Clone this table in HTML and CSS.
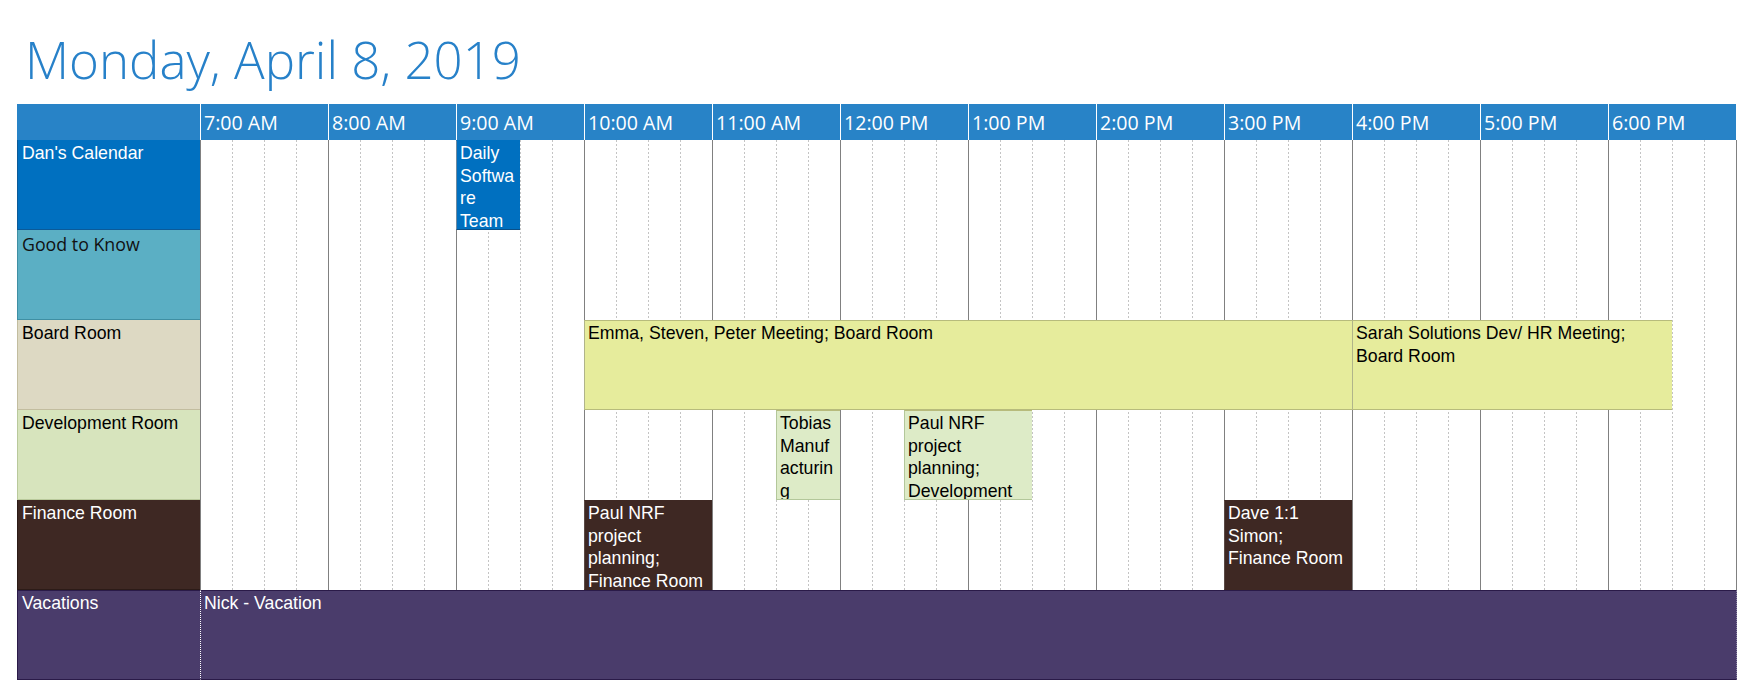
FILE: index.html
```html
<!DOCTYPE html>
<html lang="en">
<head>
<meta charset="utf-8">
<title>Monday, April 8, 2019</title>
<link rel="stylesheet" href="styles.css">
</head>
<body>
<div class="page">
  <h1 class="title">Monday, April 8, 2019</h1>
  <div class="sched">
    <div class="hcorner"></div>
    <div class="hh">7:00 AM</div>
    <div class="hh">8:00 AM</div>
    <div class="hh">9:00 AM</div>
    <div class="hh">10:00 AM</div>
    <div class="hh">11:00 AM</div>
    <div class="hh">12:00 PM</div>
    <div class="hh">1:00 PM</div>
    <div class="hh">2:00 PM</div>
    <div class="hh">3:00 PM</div>
    <div class="hh">4:00 PM</div>
    <div class="hh">5:00 PM</div>
    <div class="hh">6:00 PM</div>

    <div class="lbl r1 dan">Dan's Calendar</div>
    <div class="lbl r2 good">Good to Know</div>
    <div class="lbl r3 board">Board Room</div>
    <div class="lbl r4 dev">Development Room</div>
    <div class="lbl r5 fin">Finance Room</div>
    <div class="lbl r6 vac">Vacations</div>

    <div class="lines">
      <i></i><i></i><i></i><i></i><i></i><i></i><i></i><i></i>
      <i></i><i></i><i></i><i></i><i></i><i></i><i></i><i></i>
      <i></i><i></i><i></i><i></i><i></i><i></i><i></i><i></i>
      <i></i><i></i><i></i><i></i><i></i><i></i><i></i><i></i>
      <i></i><i></i><i></i><i></i><i></i><i></i><i></i><i></i>
      <i></i><i></i><i></i><i></i><i></i><i></i><i></i><i></i>
    </div>

    <div class="ev r1 ev-dan" style="grid-column: 10 / 12">Daily Software Team</div>
    <div class="ev r3 ev-board" style="grid-column: 14 / 38">Emma, Steven, Peter Meeting; Board Room</div>
    <div class="ev r3 ev-board" style="grid-column: 38 / 48">Sarah Solutions Dev/ HR Meeting; Board Room</div>
    <div class="ev r4 ev-dev" style="grid-column: 20 / 22">Tobias Manufacturing</div>
    <div class="ev r4 ev-dev" style="grid-column: 24 / 28">Paul NRF project planning; Development</div>
    <div class="ev r5 ev-fin" style="grid-column: 14 / 18">Paul NRF project planning; Finance Room</div>
    <div class="ev r5 ev-fin" style="grid-column: 34 / 38">Dave 1:1 Simon; Finance Room</div>
    <div class="ev r6 ev-vac" style="grid-column: 2 / 51">Nick - Vacation</div>
  </div>
</div>
</body>
</html>
```

FILE: styles.css
```css
html, body {
  margin: 0;
  padding: 0;
  background: #ffffff;
}

.page {
  padding: 25px 0 0 17px;
}

.title {
  margin: 0 0 11px 0;
  padding-left: 8px;
  font-family: "Open Sans", "Liberation Sans", sans-serif;
  font-weight: 300;
  font-size: 51px;
  line-height: 68px;
  color: #2781c9;
  white-space: nowrap;
}

.sched {
  display: grid;
  grid-template-columns: 183px repeat(48, 32px) 1px;
  grid-template-rows: 36px repeat(6, 90px);
  font-family: "Liberation Sans", Arial, sans-serif;
  font-size: 17.7px;
  line-height: 22.5px;
}

/* header */
.hcorner {
  grid-row: 1;
  grid-column: 1;
  background: #2883c7;
}

.hh {
  grid-row: 1;
  grid-column: span 4;
  background: #2883c7;
  border-left: 1px solid #ffffff;
  padding: 2px 0 0 3px;
  color: #ffffff;
  font-family: "Open Sans", "Liberation Sans", sans-serif;
  font-size: 19.6px;
  line-height: 34px;
  white-space: nowrap;
  overflow: hidden;
}

.hh:last-child {
  grid-column: span 5;
}

/* row placement */
.r1 { grid-row: 2; }
.r2 { grid-row: 3; }
.r3 { grid-row: 4; }
.r4 { grid-row: 5; }
.r5 { grid-row: 6; }
.r6 { grid-row: 7; }

/* row labels */
.lbl {
  grid-column: 1;
  padding: 2px 4px 0 4px;
  border-left: 1px solid rgba(0, 0, 0, 0.22);
  border-bottom: 1px solid rgba(0, 0, 0, 0.22);
  overflow: hidden;
  white-space: nowrap;
}

.dan { background: #0070c0; color: #ffffff; border-color: #0b5a98; }
.good {
  background: #5bafc4;
  color: #111111;
  font-family: "Open Sans", "Liberation Sans", sans-serif;
  font-size: 17.8px;
  padding-top: 3px;
  border-color: #3f8fa3;
}
.board { background: #ddd9c3; color: #000000; border-color: #c2bd9f; }
.dev { background: #d7e4bd; color: #000000; border-color: #b9c99b; }
.fin { background: #3e2823; color: #ffffff; border-color: #2c1b17; }
.vac {
  background: #4a3c6b;
  color: #ffffff;
  border: 1px solid #2a1a48;
  border-right: 0;
  padding-top: 1px;
}

/* grid lines of the time area */
.lines {
  grid-column: 2 / 51;
  grid-row: 2 / 7;
  display: flex;
  box-sizing: border-box;
  border-right: 1px solid #808080;
  background: #ffffff;
}

.lines i {
  flex: 0 0 32px;
  box-sizing: border-box;
  background: repeating-linear-gradient(to bottom, #c4c4c4 0 2px, transparent 2px 4px) left top / 1px 100% no-repeat;
}

.lines i:nth-child(4n+1) {
  background: linear-gradient(#808080, #808080) left top / 1px 100% no-repeat;
}

/* events */
.ev {
  position: relative;
  z-index: 1;
  box-sizing: border-box;
  padding: 1px 4px 0 3px;
  border-top: 1px solid transparent;
  border-bottom: 1px solid transparent;
  border-left: 1px solid transparent;
  overflow: hidden;
  overflow-wrap: anywhere;
}

.ev-dan {
  background: #0070c0;
  color: #ffffff;
  border-top-color: #0070c0;
  border-bottom-color: #0b4f86;
  border-left-color: #6f8aa0;
}

.ev-board {
  background: #e6ec9c;
  color: #000000;
  border-top-color: #b7bb7c;
  border-bottom-color: #b7bb7c;
  border-left-color: #b0b48a;
}

.ev-dev {
  background: #ddebc7;
  color: #000000;
  border-top-color: #b7bb7c;
  border-bottom-color: #b3c79a;
  border-left-color: #b3c79a;
}

.ev-fin {
  background: #3e2823;
  color: #ffffff;
  border-top-color: #3e2823;
  border-bottom-color: #3e2823;
  border-left-color: #5a4a46;
}

.ev-vac {
  background: #4a3c6b;
  color: #ffffff;
  border-top: 1px solid #2a1a48;
  border-bottom: 1px solid #2a1a48;
  border-left: 1px dotted #ffffff;
  border-right: 1px dotted #8c84a4;
  white-space: nowrap;
}
```
